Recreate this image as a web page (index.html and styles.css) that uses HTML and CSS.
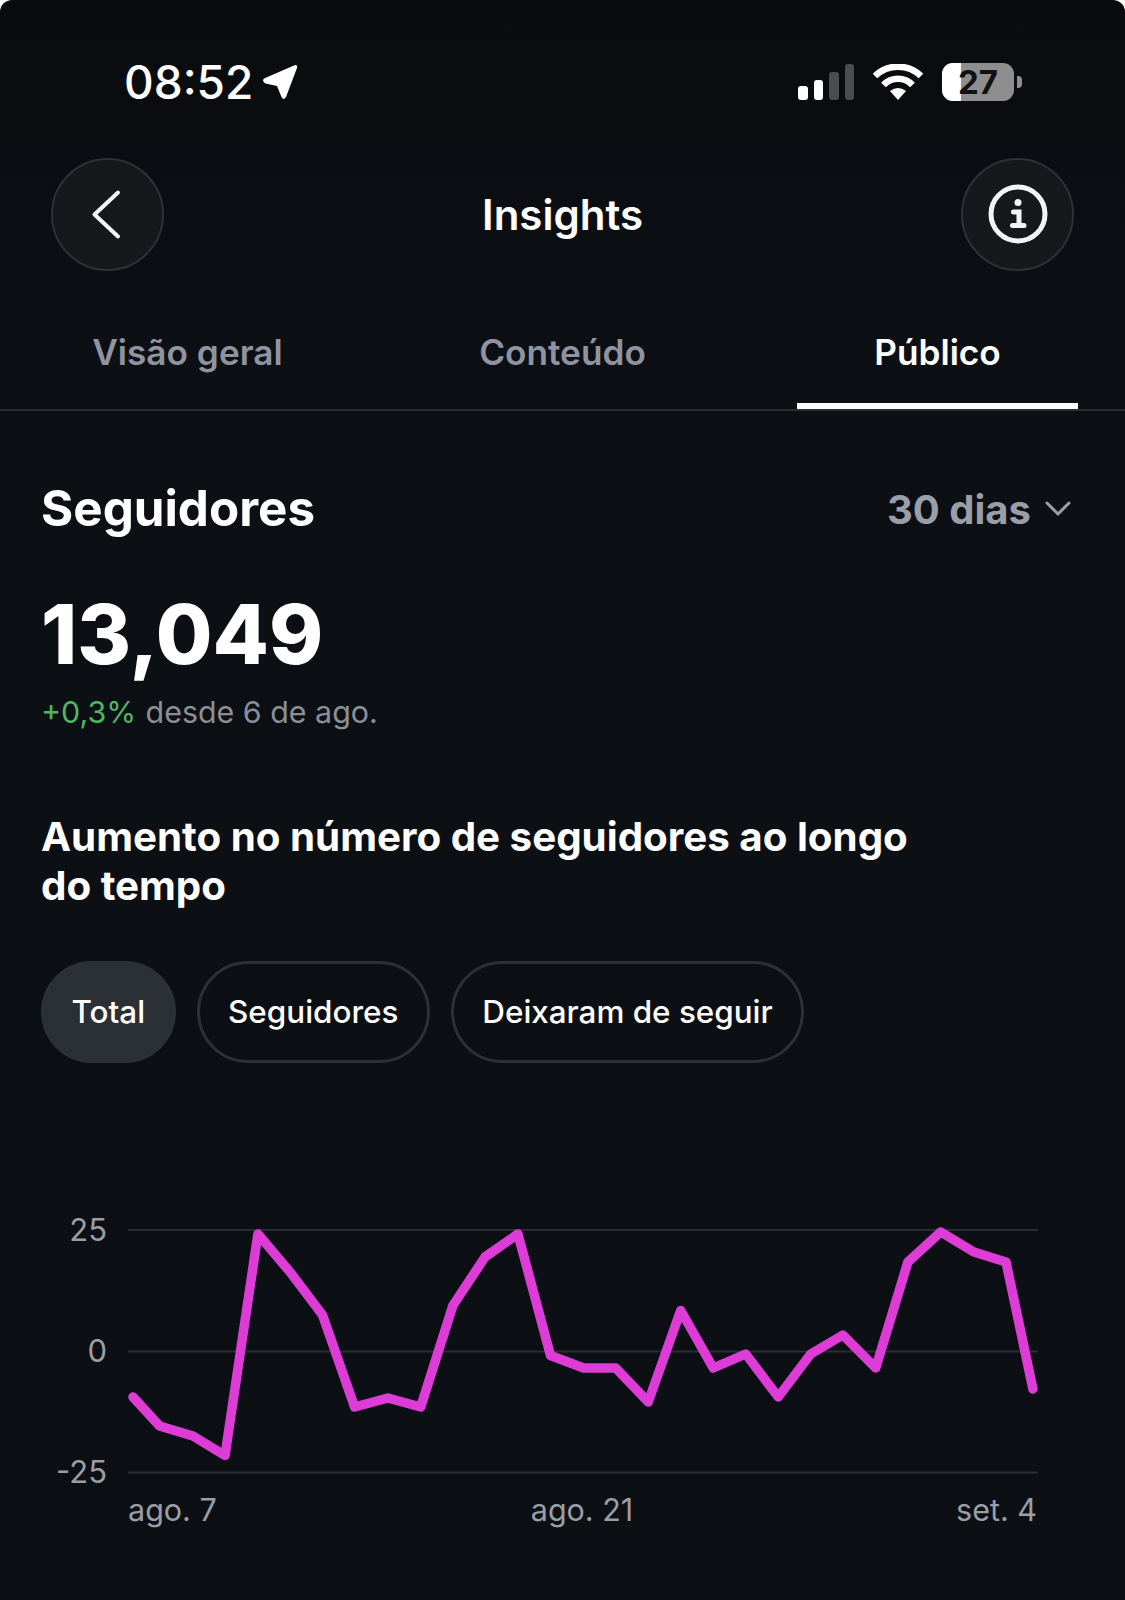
FILE: index.html

```html
<!DOCTYPE html>
<html lang="pt">
<head>
  <meta charset="UTF-8">
  <meta name="viewport" content="width=device-width, initial-scale=1.0">
  <title>Insights</title>
  <link rel="stylesheet" href="styles.css">
</head>
<body>
  <div class="screen">
    <div class="status">
      <div class="status-left">
        <span class="time">08:52</span>
        <svg class="loc" width="36" height="36" viewBox="0 0 36 36">
          <path d="M2 14.500 L32 1.500 Q36 0 35 4 L24 33 Q21.500 37 19.500 33 L15 22 L3.500 19.500 Q-0.500 17 2 14.500 Z" fill="#fff"/>
        </svg>
      </div>
      <div class="status-right">
        <div class="signal">
          <span class="bar b1"></span>
          <span class="bar b2"></span>
          <span class="bar b3 off"></span>
          <span class="bar b4 off"></span>
        </div>
        <svg class="wifi" width="50" height="36" viewBox="0 0 50 36">
          <path d="M2 12 A33 33 0 0 1 48 12" fill="none" stroke="#fff" stroke-width="6.500"/>
          <path d="M10.500 21 A20 20 0 0 1 39.500 21" fill="none" stroke="#fff" stroke-width="6.500"/>
          <path d="M17 27 Q25 21 33 27 L25 36 Z" fill="#fff"/>
        </svg>
        <div class="battery"><span class="level"></span><span class="pct">27</span></div>
        <span class="nub"></span>
      </div>
    </div>

    <div class="nav">
      <div class="round">
        <svg width="40" height="60" viewBox="0 0 40 60">
          <path d="M30 8.500 L6.500 30.500 L30 52.500" fill="none" stroke="#f4f4f5" stroke-width="4" stroke-linecap="round" stroke-linejoin="round"/>
        </svg>
      </div>
      <div class="nav-title">Insights</div>
      <div class="round">
        <svg width="60" height="60" viewBox="0 0 60 60">
          <circle cx="30" cy="30" r="27" fill="none" stroke="#f4f4f5" stroke-width="5"/>
          <circle cx="30" cy="18.500" r="3.500" fill="#f4f4f5"/>
          <path d="M25.500 28 H31 V41 M24.500 41.500 H36" fill="none" stroke="#f4f4f5" stroke-width="5" stroke-linecap="round"/>
        </svg>
      </div>
    </div>

    <div class="tabs">
      <div class="tab">Visão geral</div>
      <div class="tab">Conteúdo</div>
      <div class="tab active">Público</div>
    </div>

    <div class="content">
      <div class="head-row">
        <h2>Seguidores</h2>
        <div class="range">30 dias
          <svg width="28" height="18" viewBox="0 0 28 18">
            <path d="M3 3 L14 14 L25 3" fill="none" stroke="#9a9ea9" stroke-width="3" stroke-linecap="round" stroke-linejoin="round"/>
          </svg>
        </div>
      </div>
      <div class="total">13,049</div>
      <div class="delta"><span class="up">+0,3%</span> desde 6 de ago.</div>

      <h3>Aumento no número de seguidores ao longo<br>do tempo</h3>

      <div class="chips">
        <div class="chip selected">Total</div>
        <div class="chip">Seguidores</div>
        <div class="chip">Deixaram de seguir</div>
      </div>

      <svg class="chart" width="1041" height="350" viewBox="0 0 1041 350">
        <g class="grid">
          <line x1="87" y1="20" x2="997" y2="20"/>
          <line x1="87" y1="141.500" x2="997" y2="141.500"/>
          <line x1="87" y1="262.500" x2="997" y2="262.500"/>
        </g>
        <g class="ylab">
          <text x="66" y="31">25</text>
          <text x="66" y="152">0</text>
          <text x="66" y="273">-25</text>
        </g>
        <polyline class="line" points="92,187 118.600,216 151.900,226 184,245.500 216.900,24 249,62 281.500,105 313.600,197 346.900,188 379.700,197 411.900,95.500 444,47 476.900,24 509.500,145.500 542.600,158 574.700,158 607.200,192 639.700,100.500 672.200,158 704.700,144 737.200,187 769.700,144 801.900,125 834.700,158 866.900,52 899.700,22 932.900,42 965,52 991.900,179"/>
        <text class="xlab" x="87" y="311">ago. 7</text>
        <text class="xlab mid" x="541" y="311">ago. 21</text>
        <text class="xlab end" x="996" y="311">set. 4</text>
      </svg>
    </div>
  </div>
</body>
</html>
```

FILE: styles.css

```css
* {
  box-sizing: border-box;
}
html, body {
  margin: 0;
  padding: 0;
  background: #fff;
}
body {
  font-family: Inter, "Liberation Sans", sans-serif;
  color: #fff;
}
.screen {
  width: 1125px;
  height: 1600px;
  overflow: hidden;
  background: linear-gradient(#090b0e 0, #0c0f14 300px);
  border-radius: 12px 12px 0 0;
}

/* status bar */
.status {
  height: 157px;
  padding: 62px 103px 0 124px;
  display: flex;
  justify-content: space-between;
  align-items: flex-start;
}
.status-left {
  display: flex;
  align-items: center;
  gap: 9px;
  height: 40px;
}
.time {
  font-size: 46px;
  font-weight: 500;
  line-height: 40px;
}
.status-right {
  display: flex;
  align-items: center;
  height: 40px;
}
.signal {
  display: flex;
  align-items: flex-end;
  gap: 6px;
  height: 36px;
  margin-right: 19px;
}
.bar {
  width: 9.500px;
  background: #fff;
  border-radius: 3px;
}
.bar.off {
  background: #4a4c4f;
}
.b1 { height: 14px; }
.b2 { height: 20px; }
.b3 { height: 28px; }
.b4 { height: 36px; }
.wifi {
  margin-right: 19px;
}
.battery {
  position: relative;
  width: 72px;
  height: 38px;
  border-radius: 11px;
  background: #8e8e8e;
  overflow: hidden;
}
.level {
  display: block;
  width: 19px;
  height: 100%;
  background: #fff;
}
.pct {
  position: absolute;
  inset: 0;
  text-align: center;
  font-size: 33px;
  line-height: 38px;
  font-weight: 700;
  color: #111;
}
.nub {
  width: 5px;
  height: 12px;
  margin-left: 3px;
  background: #8e8e8e;
  border-radius: 0 4px 4px 0;
}

/* nav */
.nav {
  height: 114px;
  padding: 0 51px;
  display: flex;
  justify-content: space-between;
  align-items: center;
}
.round {
  width: 113px;
  height: 113px;
  border-radius: 50%;
  background: #16181c;
  border: 2px solid #2e3135;
  display: flex;
  align-items: center;
  justify-content: center;
}
.nav-title {
  font-size: 42px;
  font-weight: 600;
}

/* tabs */
.tabs {
  margin-top: 39px;
  height: 101px;
  display: flex;
  border-bottom: 2px solid #2a2d31;
}
.tab {
  flex: 1;
  text-align: center;
  font-size: 35.200px;
  font-weight: 600;
  color: #9094a1;
  line-height: 85px;
  position: relative;
}
.tab.active {
  color: #fff;
}
.tab.active::after {
  content: "";
  position: absolute;
  left: 47px;
  right: 47px;
  bottom: 0;
  height: 6px;
  background: #fff;
}

/* content */
.content {
  padding: 0 41px;
}
.head-row {
  margin-top: 67px;
  padding-right: 12px;
  display: flex;
  justify-content: space-between;
  align-items: center;
  height: 60px;
}
h2 {
  margin: 0;
  font-size: 49.300px;
  font-weight: 650;
}
.range {
  display: flex;
  align-items: center;
  gap: 13px;
  padding-top: 2px;
  font-size: 40px;
  font-weight: 700;
  color: #9a9ea9;
}
.total {
  margin-top: 52px;
  font-size: 82px;
  font-weight: 800;
  line-height: 90px;
}
.delta {
  margin-top: 13px;
  font-size: 30.400px;
  line-height: 38px;
  color: #8b8f98;
}
.up {
  color: #4fb75f;
  margin-right: 1px;
}
h3 {
  margin: 81px 0 0;
  font-size: 40.300px;
  line-height: 49px;
  font-weight: 650;
}
.chips {
  margin-top: 51px;
  display: flex;
  gap: 21px;
}
.chip {
  height: 102px;
  line-height: 96px;
  padding: 0 28.500px;
  border-radius: 51px;
  border: 3px solid #2d3036;
  font-size: 31.400px;
  font-weight: 500;
}
.chip.selected {
  padding: 0 27.500px;
  background: #2b2f36;
}

/* chart */
.chart {
  display: block;
  margin: 147px 0 0 0;
}
.grid line {
  stroke: #2a2d31;
  stroke-width: 2;
}
.ylab text {
  fill: #9a9ea5;
  font-size: 31px;
  text-anchor: end;
}
.xlab {
  fill: #9a9ea5;
  font-size: 30.500px;
}
.xlab.mid {
  text-anchor: middle;
}
.xlab.end {
  text-anchor: end;
}
.line {
  fill: none;
  stroke: #dd3dd6;
  stroke-width: 9.500;
  stroke-linejoin: round;
  stroke-linecap: round;
}
```
